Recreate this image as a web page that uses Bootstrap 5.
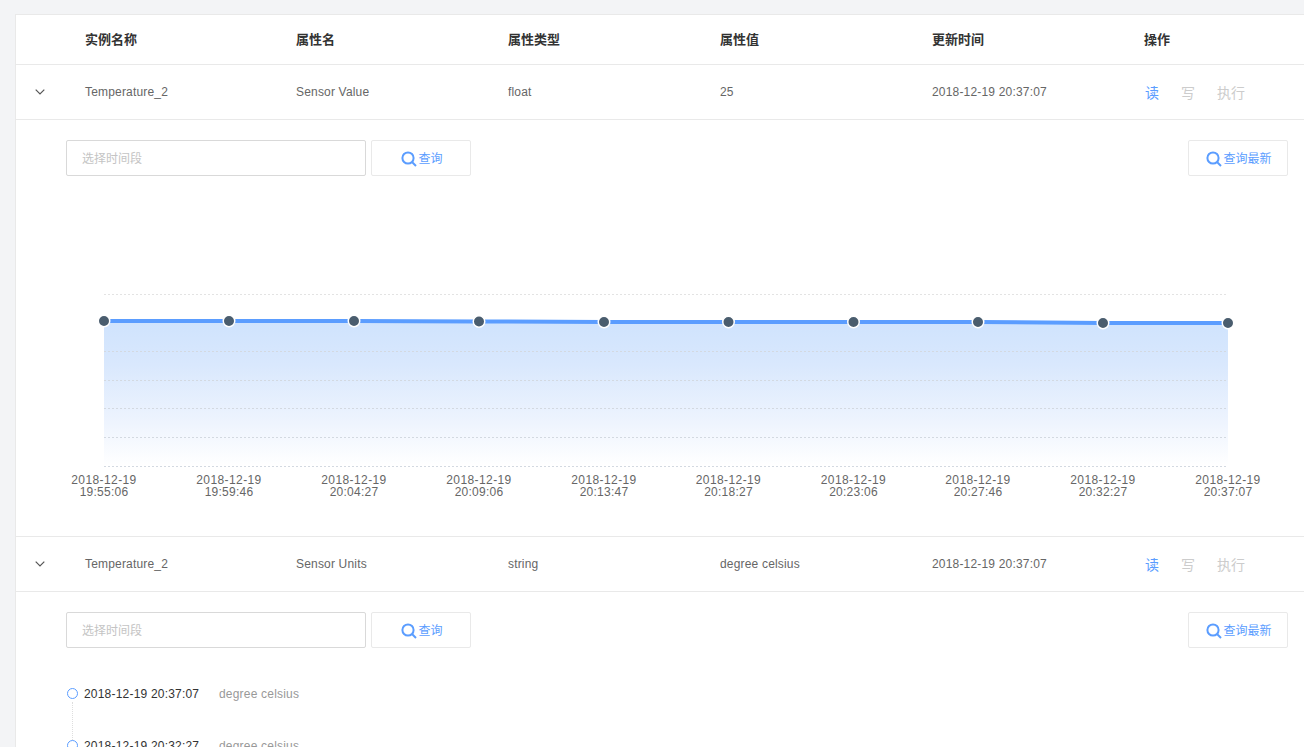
<!DOCTYPE html>
<html lang="zh">
<head>
<meta charset="utf-8">
<title>设备属性</title>
<link href="https://cdn.jsdelivr.net/npm/bootstrap@5.3.0/dist/css/bootstrap.min.css" rel="stylesheet">
<style>
html,body{height:747px;overflow:hidden}
body{background:#f3f4f6;font-family:"Liberation Sans","Noto Sans CJK SC",sans-serif;font-size:12px;color:#666;padding:14px 0 0 15px}
.sheet{background:#fff;border:1px solid #e9e9e9;border-right:0;border-bottom:0;height:760px;overflow:hidden}
.attr-row{display:grid;grid-template-columns:69px 211px 212px 212px 212px 212px 1fr;align-items:center;border-bottom:1px solid #e9e9e9;height:55px;letter-spacing:.18px}
.attr-head{height:50px;font-weight:700;color:#333;font-size:13px;letter-spacing:0}
.attr-toggle{padding-left:19px;display:flex;align-items:center}
.acts{display:flex;gap:22px;font-size:14px;color:#ccc;padding-left:1px;padding-top:2px;letter-spacing:0}
.acts .on{color:#5b9dff}
.panel{padding:20px 16px 0 50px}
.chart-panel{height:417px;border-bottom:1px solid #e9e9e9}
.tool-input{width:300px;height:36px;border:1px solid #d9d9d9;border-radius:2px;padding:2px 15px 0;font-size:12px;color:#333;background:#fff;outline:0}
.tool-input::placeholder{color:#c4c4c4}
.tool-btn{height:36px;width:100px;border:1px solid #e9e9e9;border-radius:2px;background:#fff;color:#5b9dff;font-size:12px;padding:1px 0 0 2px;gap:1px}
.tool-btn.wide{margin-left:auto}
.tool-row{gap:5px}
.chart-svg{display:block;margin:4px 0 0 -66px;width:1304px;height:330px}
.chart-svg text{font-family:"Liberation Sans",sans-serif;font-size:12px;fill:#666;text-anchor:middle;letter-spacing:.4px}
.chart-svg text.clock{letter-spacing:.25px}
.hist{margin-top:40px;position:relative}
.hist-item{height:52px}
.hist-item>div{display:flex;align-items:center;height:12px}
.hist-dot{width:11px;height:11px;border:1.5px solid #5b9dff;border-radius:50%;background:#fff;margin:-1px 6px 0 1px;flex:none}
.hist-time{color:#333;width:135px;letter-spacing:.2px}
.hist-val{color:#999;letter-spacing:.2px}
.hist-line{position:absolute;left:6px;top:14px;height:38px;border-left:1px dotted #dedede}
</style>
</head>
<body>
<div class="sheet">
  <div class="attr-row attr-head"><span></span><span>实例名称</span><span>属性名</span><span>属性类型</span><span>属性值</span><span>更新时间</span><span>操作</span></div>

  <div class="attr-row">
    <span class="attr-toggle"><svg width="10" height="6" viewBox="0 0 10 6" fill="none" stroke="#555" stroke-width="1.2"><path d="M.7.7 5 5 9.3.7"/></svg></span>
    <span>Temperature_2</span><span>Sensor Value</span><span>float</span><span>25</span><span>2018-12-19 20:37:07</span>
    <span class="acts"><span class="on">读</span><span>写</span><span>执行</span></span>
  </div>
  <div class="panel chart-panel">
    <div class="d-flex tool-row">
      <input class="tool-input" placeholder="选择时间段">
      <button class="btn tool-btn d-flex align-items-center justify-content-center"><svg width="16" height="16" viewBox="0 0 16 16" fill="none" stroke="#5b9dff" stroke-width="2"><circle cx="7" cy="7" r="5.6"/><path d="m11 11 4 4"/></svg>查询</button>
      <button class="btn tool-btn wide d-flex align-items-center justify-content-center"><svg width="16" height="16" viewBox="0 0 16 16" fill="none" stroke="#5b9dff" stroke-width="2"><circle cx="7" cy="7" r="5.6"/><path d="m11 11 4 4"/></svg>查询最新</button>
    </div>
    <svg class="chart-svg" viewBox="0 180 1304 330" role="img" aria-label="属性值折线图">
      <defs><linearGradient id="areaFill" x1="0" y1="0" x2="0" y2="1"><stop offset="0" stop-color="#cfe3fd"/><stop offset=".3" stop-color="#d9e8fd"/><stop offset=".7" stop-color="#eef4fe"/><stop offset="1" stop-color="#fff"/></linearGradient></defs>
      <path d="M104 294.5H1228" stroke="#e3e3e3" stroke-dasharray="2 2"/>
      <path d="M104 321 229 321 354 321 479 321.5 604 322 728.5 322 853.5 322 978 322 1103 323 1228 323V466H104Z" fill="url(#areaFill)"/>
      <path d="M104 351.5H1228M104 380.5H1228M104 408.5H1228M104 437.5H1228M104 466.5H1228" stroke="#d3d9e1" stroke-dasharray="2 2"/>
      <path d="M104 321 229 321 354 321 479 321.5 604 322 728.5 322 853.5 322 978 322 1103 323 1228 323" fill="none" stroke="#5b9dff" stroke-width="4"/>
      <g fill="#4a5d6e" stroke="#fff" stroke-width="1.5">
        <circle cx="104" cy="321" r="5.75"/><circle cx="229" cy="321" r="5.75"/><circle cx="354" cy="321" r="5.75"/><circle cx="479" cy="321.5" r="5.75"/><circle cx="604" cy="322" r="5.75"/><circle cx="728.5" cy="322" r="5.75"/><circle cx="853.5" cy="322" r="5.75"/><circle cx="978" cy="322" r="5.75"/><circle cx="1103" cy="323" r="5.75"/><circle cx="1228" cy="323" r="5.75"/>
      </g>
      <text x="104" y="484">2018-12-19</text><text class="clock" x="104" y="496">19:55:06</text>
      <text x="229" y="484">2018-12-19</text><text class="clock" x="229" y="496">19:59:46</text>
      <text x="354" y="484">2018-12-19</text><text class="clock" x="354" y="496">20:04:27</text>
      <text x="479" y="484">2018-12-19</text><text class="clock" x="479" y="496">20:09:06</text>
      <text x="604" y="484">2018-12-19</text><text class="clock" x="604" y="496">20:13:47</text>
      <text x="728.5" y="484">2018-12-19</text><text class="clock" x="728.5" y="496">20:18:27</text>
      <text x="853.5" y="484">2018-12-19</text><text class="clock" x="853.5" y="496">20:23:06</text>
      <text x="978" y="484">2018-12-19</text><text class="clock" x="978" y="496">20:27:46</text>
      <text x="1103" y="484">2018-12-19</text><text class="clock" x="1103" y="496">20:32:27</text>
      <text x="1228" y="484">2018-12-19</text><text class="clock" x="1228" y="496">20:37:07</text>
    </svg>
  </div>

  <div class="attr-row">
    <span class="attr-toggle"><svg width="10" height="6" viewBox="0 0 10 6" fill="none" stroke="#555" stroke-width="1.2"><path d="M.7.7 5 5 9.3.7"/></svg></span>
    <span>Temperature_2</span><span>Sensor Units</span><span>string</span><span>degree celsius</span><span>2018-12-19 20:37:07</span>
    <span class="acts"><span class="on">读</span><span>写</span><span>执行</span></span>
  </div>
  <div class="panel">
    <div class="d-flex tool-row">
      <input class="tool-input" placeholder="选择时间段">
      <button class="btn tool-btn d-flex align-items-center justify-content-center"><svg width="16" height="16" viewBox="0 0 16 16" fill="none" stroke="#5b9dff" stroke-width="2"><circle cx="7" cy="7" r="5.6"/><path d="m11 11 4 4"/></svg>查询</button>
      <button class="btn tool-btn wide d-flex align-items-center justify-content-center"><svg width="16" height="16" viewBox="0 0 16 16" fill="none" stroke="#5b9dff" stroke-width="2"><circle cx="7" cy="7" r="5.6"/><path d="m11 11 4 4"/></svg>查询最新</button>
    </div>
    <div class="hist">
      <div class="hist-line"></div>
      <div class="hist-item"><div><span class="hist-dot"></span><span class="hist-time">2018-12-19 20:37:07</span><span class="hist-val">degree celsius</span></div></div>
      <div class="hist-item"><div><span class="hist-dot"></span><span class="hist-time">2018-12-19 20:32:27</span><span class="hist-val">degree celsius</span></div></div>
    </div>
  </div>
</div>
<script src="https://cdn.jsdelivr.net/npm/bootstrap@5.3.0/dist/js/bootstrap.bundle.min.js"></script>
</body>
</html>
